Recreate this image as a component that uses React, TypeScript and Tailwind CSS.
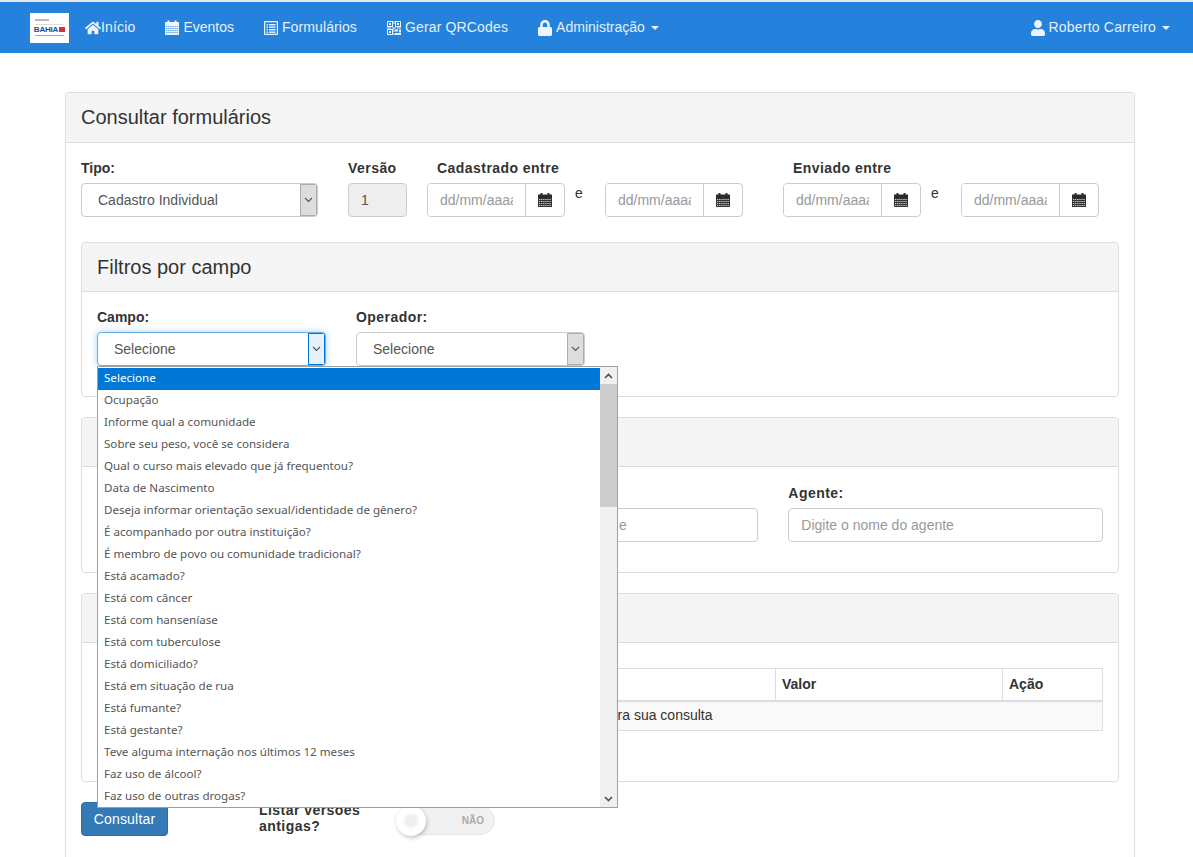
import React from "react";
import { FaHome, FaLock, FaUser } from "react-icons/fa";

const options = [
  "Selecione",
  "Ocupação",
  "Informe qual a comunidade",
  "Sobre seu peso, você se considera",
  "Qual o curso mais elevado que já frequentou?",
  "Data de Nascimento",
  "Deseja informar orientação sexual/identidade de gênero?",
  "É acompanhado por outra instituição?",
  "É membro de povo ou comunidade tradicional?",
  "Está acamado?",
  "Está com câncer",
  "Está com hanseníase",
  "Está com tuberculose",
  "Está domiciliado?",
  "Está em situação de rua",
  "Está fumante?",
  "Está gestante?",
  "Teve alguma internação nos últimos 12 meses",
  "Faz uso de álcool?",
  "Faz uso de outras drogas?",
];

function CalendarIcon() {
  return (
    <svg viewBox="0 0 14 14" width="14" height="14">
      <rect x="0" y="1.5" width="14" height="3.5" fill="#2a2a2a" />
      <rect x="2.5" y="0" width="2" height="2.5" fill="#2a2a2a" />
      <rect x="9.5" y="0" width="2" height="2.5" fill="#2a2a2a" />
      <rect x="0" y="5" width="14" height="9" fill="#333" />
      <g fill="#fff" opacity="0.75">
        {[6, 8, 10, 12].map((y) =>
          [1, 3.1, 5.2, 7.3, 9.4, 11.5].map((x) => <rect key={`${x}-${y}`} x={x} y={y} width="1.3" height="1" />)
        )}
      </g>
    </svg>
  );
}

function CalendarNav() {
  return (
    <svg viewBox="0 0 14 15" width="14" height="15">
      <rect x="0" y="2" width="14" height="13" rx="0.5" fill="#eef4fc" />
      <rect x="2.5" y="0.5" width="2" height="3" fill="#eef4fc" />
      <rect x="9.5" y="0.5" width="2" height="3" fill="#eef4fc" />
      <g fill="#2482dd" opacity="0.7">
        {[6, 8, 10, 12].map((y) =>
          [1, 3.1, 5.2, 7.3, 9.4, 11.5].map((x) => <rect key={`${x}-${y}`} x={x} y={y} width="1.3" height="1.1" />)
        )}
      </g>
    </svg>
  );
}

function ListIcon() {
  return (
    <svg viewBox="0 0 14 14" width="14" height="14">
      <rect x="0.6" y="0.6" width="12.8" height="12.8" rx="0.5" fill="none" stroke="#eef4fc" strokeWidth="1.2" />
      <g fill="#eef4fc">
        {[3, 5.5, 8, 10.5].map((y) => (
          <React.Fragment key={y}>
            <rect x="2.5" y={y} width="1.6" height="1.4" />
            <rect x="5" y={y} width="6.5" height="1.4" />
          </React.Fragment>
        ))}
      </g>
    </svg>
  );
}

function QrIcon() {
  const c = "#eef4fc";
  const finder = (x: number, y: number) => (
    <g key={`${x}${y}`}>
      <rect x={x + 0.5} y={y + 0.5} width="5" height="5" fill="none" stroke={c} />
      <rect x={x + 2} y={y + 2} width="2" height="2" fill={c} />
    </g>
  );
  return (
    <svg viewBox="0 0 14 14" width="14" height="14">
      {finder(0, 0)}
      {finder(8, 0)}
      {finder(0, 8)}
      <g fill={c}>
        <rect x="6.5" y="0" width="1" height="3" />
        <rect x="0" y="6.5" width="4" height="1" />
        <rect x="5" y="6.5" width="4" height="1" />
        <rect x="10" y="6.5" width="4" height="1" />
        <rect x="6.5" y="8" width="1" height="3" />
        <rect x="8" y="8.5" width="3" height="2" />
        <rect x="12" y="8.5" width="2" height="3" />
        <rect x="8" y="12" width="6" height="2" />
        <rect x="6.5" y="12" width="1" height="2" />
      </g>
    </svg>
  );
}

function Chevron() {
  return (
    <svg width="9" height="6" viewBox="0 0 9 6">
      <path d="M1 1l3.5 3.5L8 1" fill="none" stroke="#555" strokeWidth="1.1" />
    </svg>
  );
}

function Caret() {
  return <span className="ml-[2px] inline-block w-0 h-0 border-x-4 border-x-transparent border-t-4 border-t-[#eef4fc]" />;
}

function NavItem({
  icon,
  label,
  caret,
  className = "gap-1",
}: {
  icon: React.ReactNode;
  label: string;
  caret?: boolean;
  className?: string;
}) {
  return (
    <a className={`flex items-center px-[15px] h-[51px] text-[14px] text-[#e6eff9] ${className}`}>
      <span className="flex justify-center shrink-0">{icon}</span>
      <span>{label}</span>
      {caret && <Caret />}
    </a>
  );
}

function Label({ children, className = "tracking-[0.45px]" }: { children: React.ReactNode; className?: string }) {
  return <div className={`font-bold text-[14px] leading-[20px] text-[#333] mb-[5px] ${className}`}>{children}</div>;
}

function FakeSelect({ text, width, focused }: { text: string; width: string; focused?: boolean }) {
  return (
    <div
      className={`flex h-[34px] rounded border bg-white overflow-hidden ${width} ${
        focused ? "border-[#66afe9] shadow-[0_0_6px_rgba(102,175,233,0.6)]" : "border-[#ccc]"
      }`}
    >
      <div className="flex-1 pl-4 text-[14px] leading-[32px] text-[#555]">{text}</div>
      <div
        className={`w-[17px] flex items-center justify-center border ${
          focused ? "bg-[#e5f1fb] border-[#0078d7]" : "bg-[#dddddd] border-[#adadad]"
        }`}
      >
        <Chevron />
      </div>
    </div>
  );
}

function DateInput() {
  return (
    <div className="flex w-[138px] h-[34px] rounded border border-[#ccc] bg-white overflow-hidden">
      <input
        placeholder="dd/mm/aaaa"
        className="w-[97px] h-full pl-3 pr-[12px] text-[14px] bg-white outline-none placeholder:text-[#999]"
      />
      <div className="flex-1 flex items-center justify-center border-l border-[#ccc]">
        <CalendarIcon />
      </div>
    </div>
  );
}

function Panel({ children, className = "", title }: { children: React.ReactNode; className?: string; title?: string }) {
  return (
    <section className={`border border-[#ddd] rounded bg-white ${className}`}>
      <div className="bg-[#f5f5f5] border-b border-[#ddd] rounded-t h-[49px] px-[15px] text-[20px] leading-[49px] text-[#333]">
        {title}
      </div>
      {children}
    </section>
  );
}

function TextField({ placeholder }: { placeholder?: string }) {
  return (
    <input
      placeholder={placeholder}
      className="w-full h-[34px] rounded border border-[#ccc] px-3 text-[14px] outline-none placeholder:text-[#999]"
    />
  );
}

function DateRange() {
  return (
    <div className="flex">
      <DateInput />
      <span className="w-[40px] pr-[12px] text-center text-[14px] leading-[20px]">e</span>
      <DateInput />
    </div>
  );
}

export default function App() {
  return (
    <div className="relative h-[857px] overflow-hidden bg-white text-[#333] font-['Liberation_Sans',Arial,sans-serif]">
      <div className="h-[2px] bg-[#e8e8e8]" />
      <nav className="h-[51px] bg-[#2482dd] flex items-center pl-[30px] pr-[8px]">
        <div className="w-[39px] h-[30px] bg-white flex flex-col items-center mr-px pt-[6px]">
          <div className="w-[14px] h-[2px] bg-[#bbb] self-start ml-[5px]" />
          <div className="w-[29px] h-px bg-[#ddd] mt-[3px]" />
          <div className="flex items-center leading-none mt-px">
            <span className="text-[8px] font-bold text-[#1d4f8f] tracking-[-0.2px]">BAHIA</span>
            <span className="w-[6px] h-[5px] bg-[#d6323a] ml-px" />
          </div>
          <div className="w-[29px] h-px bg-[#aaa] mt-px" />
        </div>
        <NavItem icon={<FaHome size={16} color="#eef4fc" />} label="Início" className="tracking-[0.15px]" />
        <NavItem icon={<CalendarNav />} label="Eventos" />
        <NavItem icon={<ListIcon />} label="Formulários" className="gap-1 tracking-[0.1px]" />
        <NavItem icon={<QrIcon />} label="Gerar QRCodes" className="gap-1 tracking-[0.15px]" />
        <NavItem icon={<FaLock size={16} color="#eef4fc" className="-mx-px" />} label="Administração" caret />
        <div className="ml-auto">
          <NavItem icon={<FaUser size={16} color="#eef4fc" className="-mx-px" />} label="Roberto Carreiro" caret className="gap-1 tracking-[0.2px]" />
        </div>
      </nav>

      <main className="pt-[39px] px-[65px]">
        <section className="border border-[#ddd] rounded bg-white w-[1070px] h-[800px]">
          <h2 className="bg-[#f5f5f5] border-b border-[#ddd] rounded-t h-[50px] px-[15px] text-[20px] leading-[48px] text-[#333]">
            Consultar formulários
          </h2>
          <div className="px-[15px] pt-[15px]">
            <div className="flex items-start">
              <div>
                <Label className="">Tipo:</Label>
                <FakeSelect text="Cadastro Individual" width="w-[237px]" />
              </div>
              <div className="ml-[30px]">
                <Label>Versão</Label>
                <div className="w-[59px] h-[34px] rounded border border-[#ccc] bg-[#eee] pl-3 text-[14px] leading-[32px] text-[#555]">1</div>
              </div>
              <div className="ml-[20px]">
                <Label className="ml-[10px] tracking-[0.45px]">Cadastrado entre</Label>
                <DateRange />
              </div>
              <div className="ml-[40px]">
                <Label className="ml-[10px] tracking-[0.45px]">Enviado entre</Label>
                <DateRange />
              </div>
            </div>

            <Panel title="Filtros por campo" className="mt-[25px] h-[155px]">
              <div className="px-[15px] pt-[15px] flex gap-[30px]">
                <div>
                  <Label className="">Campo:</Label>
                  <FakeSelect text="Selecione" width="w-[229px]" focused />
                </div>
                <div>
                  <Label>Operador:</Label>
                  <FakeSelect text="Selecione" width="w-[229px]" />
                </div>
              </div>
            </Panel>

            <Panel className="mt-[20px] h-[156px]">
              <div className="px-[15px] pt-[41px] flex gap-[30px]">
                <div className="w-[316px]">
                  <TextField />
                </div>
                <div className="w-[316px]">
                  <TextField placeholder="Digite o nome da unidade e" />
                </div>
                <div className="w-[315px] -mt-[25px]">
                  <Label>Agente:</Label>
                  <TextField placeholder="Digite o nome do agente" />
                </div>
              </div>
            </Panel>

            <Panel className="mt-[20px] h-[189px]">
              <div className="px-[15px] pt-[25px]">
                <table className="w-full border-collapse text-[14px]">
                  <thead>
                    <tr className="h-[32px]">
                      <th className="border border-[#ddd] border-b-2 px-2 text-left w-[339px]"></th>
                      <th className="border border-[#ddd] border-b-2 px-2 text-left w-[339px]"></th>
                      <th className="border border-[#ddd] border-b-2 pl-[6px] text-left w-[227px]">Valor</th>
                      <th className="border border-[#ddd] border-b-2 pl-[6px] text-left">Ação</th>
                    </tr>
                  </thead>
                  <tbody>
                    <tr className="h-[30px] bg-[#f9f9f9]">
                      <td colSpan={4} className="border border-[#ddd] pl-[504px]">
                        para sua consulta
                      </td>
                    </tr>
                  </tbody>
                </table>
              </div>
            </Panel>

            <div className="flex items-start mt-[20px]">
              <button className="w-[87px] h-[34px] rounded bg-[#337ab7] border border-[#2e6da4] text-white text-[14px] tracking-[0.2px]">Consultar</button>
              <div className="ml-[91px] w-[110px] font-bold text-[14px] leading-[16px] tracking-[0.45px]">Listar versões antigas?</div>
              <div className="ml-[27px] mt-[4px] relative w-[99px] h-[29px] rounded-full bg-[#f1f1f1] border border-[#e6e6e6] flex items-center justify-end pr-[10px]">
                <span className="text-[10px] font-bold text-[#aaa]">NÃO</span>
                <span className="absolute -left-px -top-px w-[30px] h-[30px] rounded-full bg-white shadow-[1px_2px_4px_rgba(0,0,0,0.22)] flex items-center justify-center">
                  <span className="w-[14px] h-[14px] rounded-full bg-[#efefef] blur-[1px]" />
                </span>
              </div>
            </div>
          </div>
        </section>
      </main>

      <div className="absolute left-[97px] top-[366px] w-[521px] h-[442px] bg-white border border-[#a0a0a0] flex font-['Noto_Sans',sans-serif]">
        <ul className="flex-1 pt-px">
          {options.map((o, i) => (
            <li
              key={o}
              className={`h-[22px] pl-[6px] text-[11.6px] leading-[20px] whitespace-nowrap ${
                i === 0 ? "bg-[#0078d7] text-white" : "text-[#555]"
              }`}
            >
              {o}
            </li>
          ))}
        </ul>
        <div className="w-[17px] bg-[#f0f0f0] flex flex-col">
          <div className="h-[17px] flex items-center justify-center">
            <svg width="9" height="6" viewBox="0 0 9 6"><path d="M1 5l3.5-3.5L8 5" fill="none" stroke="#505050" strokeWidth="1.6" /></svg>
          </div>
          <div className="h-[123px] bg-[#cdcdcd]" />
          <div className="flex-1" />
          <div className="h-[17px] flex items-center justify-center">
            <svg width="9" height="6" viewBox="0 0 9 6"><path d="M1 1l3.5 3.5L8 1" fill="none" stroke="#505050" strokeWidth="1.6" /></svg>
          </div>
        </div>
      </div>
    </div>
  );
}
